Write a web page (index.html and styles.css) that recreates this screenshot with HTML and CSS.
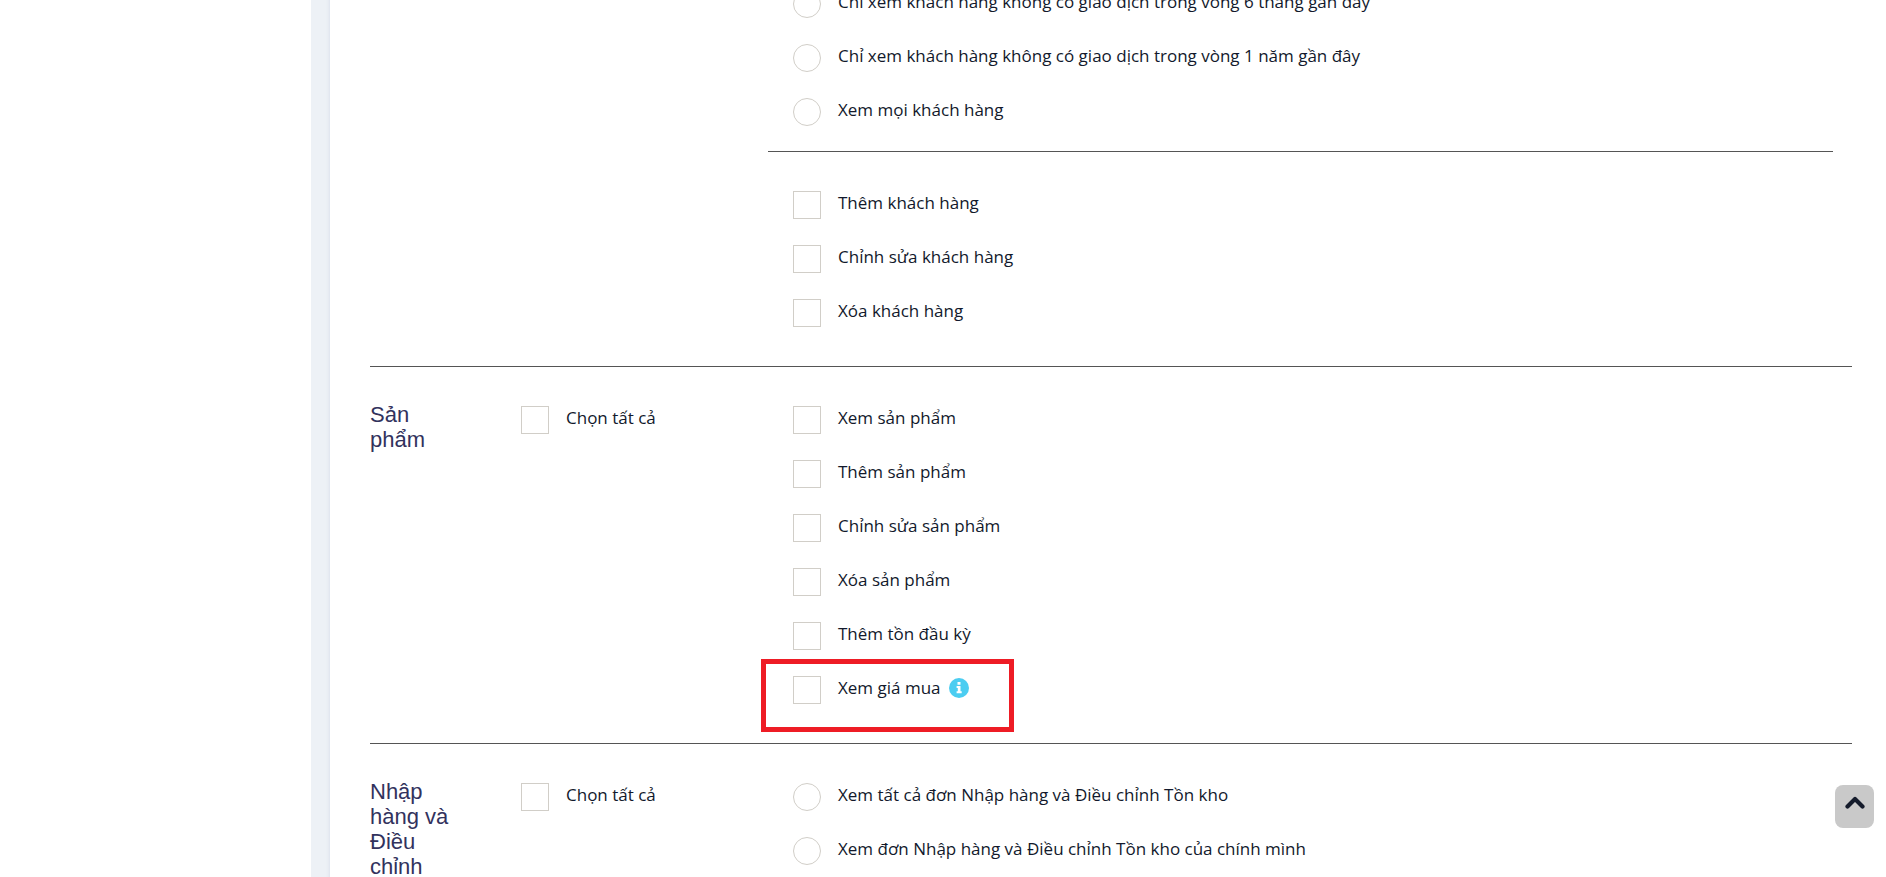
FILE: index.html
```html
<!DOCTYPE html>
<html lang="vi">
<head>
    <meta charset="UTF-8">
    <title>Phân quyền</title>
    <link rel="stylesheet" href="styles.css">
</head>
<body>
<div class="wrapper">
    <div class="sidebar"></div>
    <main class="content">
        <form class="card">
            <section class="group group-first">
                <div class="group-list">
                    <div class="sub-list sub-line">
                        <label class="item"><input type="radio" name="customer"><span>Chỉ xem khách hàng không có giao dịch trong vòng 6 tháng gần đây</span></label>
                        <label class="item"><input type="radio" name="customer"><span>Chỉ xem khách hàng không có giao dịch trong vòng 1 năm gần đây</span></label>
                        <label class="item"><input type="radio" name="customer"><span>Xem mọi khách hàng</span></label>
                    </div>
                    <div class="sub-list">
                        <label class="item"><input type="checkbox"><span>Thêm khách hàng</span></label>
                        <label class="item"><input type="checkbox"><span>Chỉnh sửa khách hàng</span></label>
                        <label class="item"><input type="checkbox"><span>Xóa khách hàng</span></label>
                    </div>
                </div>
            </section>

            <section class="group">
                <h4 class="group-title">Sản phẩm</h4>
                <div class="group-all">
                    <label class="item"><input type="checkbox"><span>Chọn tất cả</span></label>
                </div>
                <div class="group-list">
                    <div class="sub-list">
                        <label class="item"><input type="checkbox"><span>Xem sản phẩm</span></label>
                        <label class="item"><input type="checkbox"><span>Thêm sản phẩm</span></label>
                        <label class="item"><input type="checkbox"><span>Chỉnh sửa sản phẩm</span></label>
                        <label class="item"><input type="checkbox"><span>Xóa sản phẩm</span></label>
                        <label class="item"><input type="checkbox"><span>Thêm tồn đầu kỳ</span></label>
                        <label class="item item-mark"><input type="checkbox"><span>Xem giá mua</span>
                            <svg class="info" viewBox="0 0 20 20" aria-hidden="true">
                                <circle cx="10" cy="10" r="10" fill="#4bcdf1"/>
                                <path d="M8.500 4h3v2.700h-3zM7.600 8h3.900v5.200h1.200v2H7.600v-2h1.200V10H7.600z" fill="#fff"/>
                            </svg>
                        </label>
                    </div>
                </div>
            </section>

            <section class="group">
                <h4 class="group-title">Nhập hàng và Điều chỉnh</h4>
                <div class="group-all">
                    <label class="item"><input type="checkbox"><span>Chọn tất cả</span></label>
                </div>
                <div class="group-list">
                    <div class="sub-list">
                        <label class="item"><input type="radio" name="stock"><span>Xem tất cả đơn Nhập hàng và Điều chỉnh Tồn kho</span></label>
                        <label class="item"><input type="radio" name="stock"><span>Xem đơn Nhập hàng và Điều chỉnh Tồn kho của chính mình</span></label>
                    </div>
                </div>
            </section>
        </form>
    </main>
</div>
<button class="totop" type="button" aria-label="Lên đầu trang">
    <svg viewBox="0 0 20 13" width="20" height="13" aria-hidden="true">
        <path d="M2.500 10.500L10 3l7.500 7.500" fill="none" stroke="#141b2b" stroke-width="4.200" stroke-linecap="round" stroke-linejoin="round"/>
    </svg>
</button>
</body>
</html>
```

FILE: styles.css
```css
*,
*::after{
    box-sizing: border-box;
}
body{
    margin:0;
    height:100vh;
    overflow: hidden;
    background:#fff;
    color:#12192c;
    font-family: "Open Sans", "Noto Sans", sans-serif;
    font-size:17px;
    line-height: 24px;
}
.wrapper{
    display:flex;
    height:100%;
}
.sidebar{
    width:311px;
    flex:none;
    background:#fff;
}
.content{
    flex:1;
    min-width:0;
    padding-left:19px;
    overflow: hidden;
    background:#edf1f6;
}
.card{
    min-height:100%;
    padding:0 34px 0 40px;
    background:#fff;
    box-shadow: 0 0 4px #d3d8e6;
}

/* one block of permissions: title, select all, list */
.group{
    display:grid;
    grid-template-columns: 151px 247px 1fr;
    padding:26px 0;
    border-bottom:1px solid #555;
}
.group-title{
    margin:0;
    padding:9px 60px 0 0;
    color:#32325d;
    font-family: "Liberation Sans", Arial, sans-serif;
    font-size:22px;
    font-weight: normal;
    line-height: 25px;
}
.group-list{
    grid-column: 3;
    padding-right:19px;
}
.sub-list{
    padding-left:25px;
}
.sub-line{
    margin-bottom:26px;
    padding-bottom:12px;
    border-bottom:1px solid #555;
}
/* list is scrolled under the top edge */
.group-first{
    margin-top:-49px;
}

.item{
    display:flex;
    align-items: center;
    width:fit-content;
    height:54px;
    cursor:pointer;
}
.item span{
    margin-left:17px;
    padding-bottom:4px;
}
.item input{
    appearance: none;
    flex:none;
    width:28px;
    height:28px;
    margin:0;
    border:1px solid #d1cec8;
    background:#fff;
}
.item input[type="radio"]{
    border-radius: 50%;
}
.item input:checked{
    background:#4bcdf1;
}
.item-mark{
    position: relative;
}
.item-mark::after{
    content:"";
    position: absolute;
    left:-32px;
    top:-4px;
    width:253px;
    height:73px;
    border:5px solid #ee1c25;
}
.info{
    width:20px;
    height:20px;
    margin:0 0 4px 8px;
}

.totop{
    position: fixed;
    right:12px;
    bottom:49px;
    width:39px;
    height:43px;
    padding:0 0 8px;
    border:0;
    border-radius: 8px;
    background:#c9c9c9;
    cursor:pointer;
}
.totop svg{
    display:block;
    margin:0 auto;
}
```
